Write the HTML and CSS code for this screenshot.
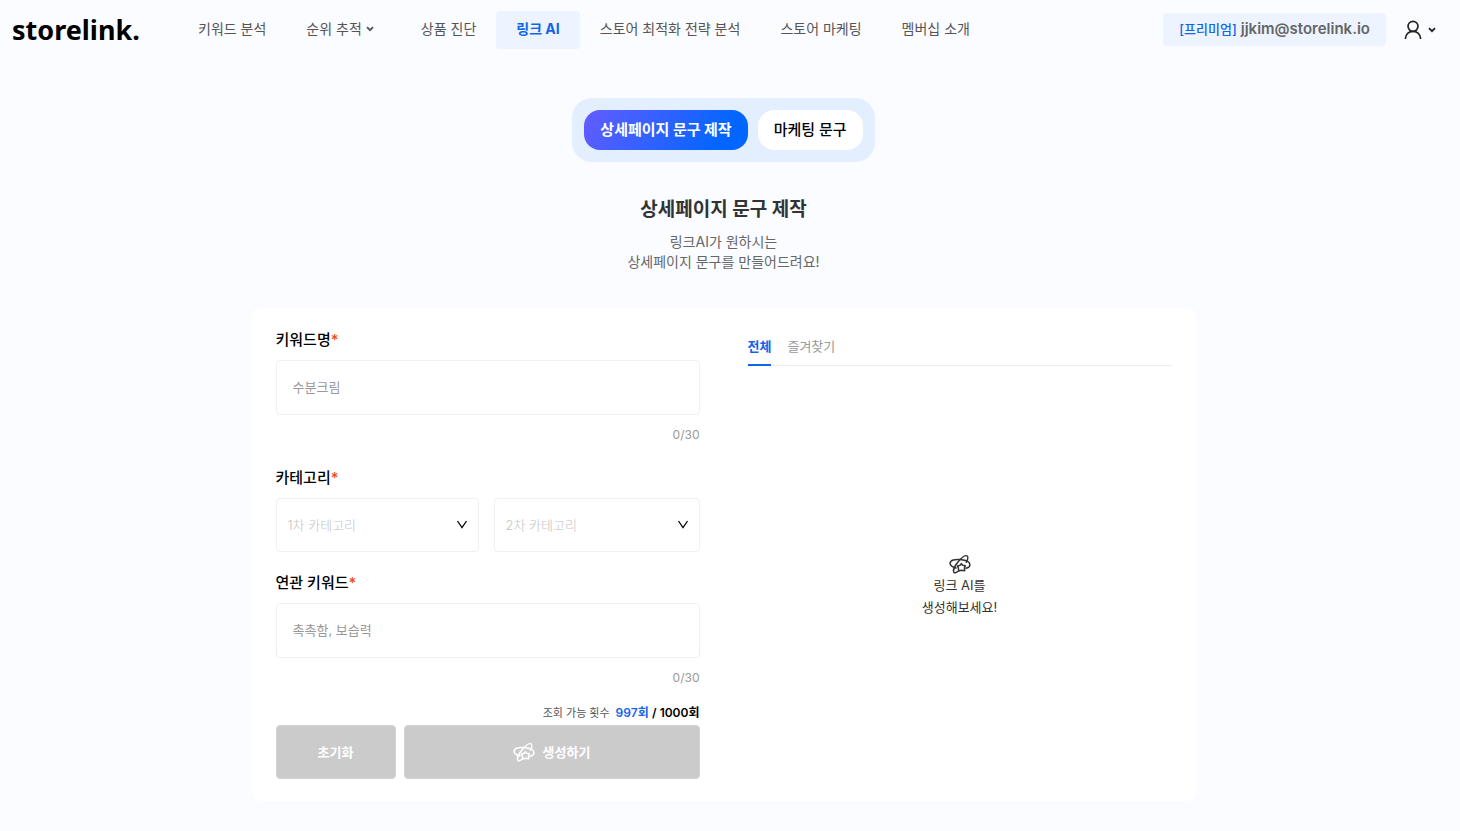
FILE: index.html
```html
<!DOCTYPE html>
<html lang="ko">
<head>
<meta charset="utf-8">
<meta name="viewport" content="width=device-width, initial-scale=1">
<title>storelink. 링크 AI</title>
<link rel="stylesheet" href="styles.css">
</head>
<body>
<svg class="defs" aria-hidden="true">
  <symbol id="atom" viewBox="0 0 22 20">
    <g fill="none" stroke="currentColor" stroke-width="1.5" stroke-linecap="round" stroke-linejoin="round">
      <path d="M7 14C3.200 12.900.900 10.900 1.100 8.900C1.400 6.100 6 5 11.300 5.600C16.800 6.200 21 8.300 20.900 10.900C20.800 12.700 19.200 13.800 17 14.200"/>
      <path d="M9 17.300C7.300 18.800 5.600 19.200 4.900 18.200C3.700 16.400 5.900 11.600 9.600 7.300C13 3.300 16.700.900 18.200 2C19.300 2.900 18.800 5.400 17.300 8.300"/>
      <path d="M12.400 9.600l1.300 1.600 2.700.500-1 2.200.300 2.900-3.300-.500-2.600.700-.400-2.900-1-2.200 2.700-.600z"/>
    </g>
  </symbol>
  <symbol id="caret" viewBox="0 0 8 6">
    <path d="M1 1.200l3 3 3-3" fill="none" stroke="currentColor" stroke-width="1.900"/>
  </symbol>
  <symbol id="arrow" viewBox="0 0 12 9">
    <path d="M1.500 1l4.500 6.500L10.500 1" fill="none" stroke="currentColor" stroke-width="1.300"/>
  </symbol>
</svg>

<header class="header">
  <a class="logo" href="#">storelink.</a>
  <nav class="nav">
    <a href="#">키워드 분석</a>
    <a href="#" class="has-menu">순위 추적<svg class="caret"><use href="#caret"/></svg></a>
    <a href="#">상품 진단</a>
    <a href="#" class="active" aria-current="page">링크 AI</a>
    <a href="#">스토어 최적화 전략 분석</a>
    <a href="#">스토어 마케팅</a>
    <a href="#">멤버십 소개</a>
  </nav>
  <div class="account"><span class="plan">[프리미엄]</span> <span class="email">jjkim@storelink.io</span></div>
  <button class="user" type="button" aria-label="내 계정">
    <svg class="person" viewBox="0 0 18 20"><g fill="none" stroke="currentColor" stroke-width="1.700"><circle cx="9" cy="6.300" r="5"/><path d="M1.300 19c.4-4.600 3.400-7.600 7.700-7.600s7.300 3 7.700 7.600"/></g></svg>
    <svg class="caret"><use href="#caret"/></svg>
  </button>
</header>

<main class="main">
  <div class="switch">
    <button type="button" class="switch-item selected">상세페이지 문구 제작</button>
    <button type="button" class="switch-item">마케팅 문구</button>
  </div>
  <h1 class="title">상세페이지 문구 제작</h1>
  <p class="subtitle">링크AI가 원하시는<br>상세페이지 문구를 만들어드려요!</p>

  <section class="card">
    <form class="form">
      <label class="label" for="keyword">키워드명<span class="required">*</span></label>
      <input class="field" id="keyword" type="text" placeholder="수분크림">
      <p class="counter">0/30</p>

      <label class="label" for="category1">카테고리<span class="required">*</span></label>
      <div class="selects">
        <div class="select">
          <select class="field" id="category1"><option>1차 카테고리</option></select>
          <svg class="arrow"><use href="#arrow"/></svg>
        </div>
        <div class="select">
          <select class="field" id="category2" aria-label="2차 카테고리"><option>2차 카테고리</option></select>
          <svg class="arrow"><use href="#arrow"/></svg>
        </div>
      </div>

      <label class="label" for="related">연관 키워드<span class="required">*</span></label>
      <input class="field" id="related" type="text" placeholder="촉촉함, 보습력">
      <p class="counter">0/30</p>

      <p class="quota"><span class="quota-name">조회 가능 횟수</span><span><b class="left">997회</b> <b>/ 1000회</b></span></p>
      <div class="actions">
        <button class="btn" type="reset">초기화</button>
        <button class="btn" type="button"><svg class="atom"><use href="#atom"/></svg>생성하기</button>
      </div>
    </form>

    <div class="results">
      <div class="tabs" role="tablist">
        <button class="tab current" type="button" role="tab" aria-selected="true">전체</button>
        <button class="tab" type="button" role="tab" aria-selected="false">즐겨찾기</button>
      </div>
      <div class="empty">
        <svg class="atom"><use href="#atom"/></svg>
        <p>링크 AI를<br>생성해보세요!</p>
      </div>
    </div>
  </section>
</main>
</body>
</html>
```

FILE: styles.css
```css
* { box-sizing: border-box; }

body {
  margin: 0;
  min-height: 100vh;
  background: #fafcff;
  color: #000;
  font: 14px/20px Inter, "Noto Sans CJK KR", sans-serif;
}

h1, p { margin: 0; }
a { color: inherit; text-decoration: none; }
button, input, select { font: inherit; color: inherit; }
button { border: 0; padding: 0; background: none; cursor: pointer; }
svg { display: block; flex: none; }
.defs { position: absolute; width: 0; height: 0; }

.header {
  display: flex;
  align-items: center;
  height: 59px;
  padding: 0 24px 0 12px;
}

.logo {
  width: 166px;
  font: 700 27px/38px "Noto Sans", sans-serif;
}

.nav { display: flex; color: #555; white-space: nowrap; }
.nav a {
  display: flex;
  align-items: center;
  gap: 4px;
  height: 38px;
  padding: 0 20px 2px;
}
.nav a.has-menu { padding-right: 27px; }
.nav a.active {
  border-radius: 4px;
  background: #edf4ff;
  color: #1264e8;
  font-weight: 700;
}

.caret { width: 8px; height: 6px; }

.account {
  display: flex;
  align-items: center;
  gap: 4px;
  height: 33px;
  margin-left: auto;
  padding: 0 16px 2px;
  border-radius: 4px;
  background: #edf4ff;
  white-space: nowrap;
}
.plan { color: #1264e8; font-size: 13px; font-weight: 500; }
.email { color: #666; font-size: 15px; font-weight: 600; }

.user {
  display: flex;
  align-items: center;
  gap: 6px;
  margin-left: 18px;
  color: #222;
}
.person { width: 18px; height: 20px; }

.main {
  display: flex;
  flex-direction: column;
  align-items: center;
  padding: 39px 13px 30px 0;
}

.switch {
  display: flex;
  gap: 10px;
  padding: 12px;
  border-radius: 20px;
  background: #e3eeff;
}
.switch-item {
  height: 40px;
  padding: 0 16px;
  border-radius: 16px;
  background: #fff;
  font-size: 15px;
  font-weight: 500;
}
.switch-item.selected {
  background: linear-gradient(120deg, #655cff, #0066ff 85%);
  color: #fff;
  font-weight: 700;
}

.title {
  margin-top: 33px;
  color: #333;
  font-size: 19px;
  font-weight: 700;
  line-height: 30px;
}
.subtitle { margin-top: 7px; color: #666; text-align: center; }

.card {
  display: grid;
  grid-template-columns: 1fr 1fr;
  gap: 48px;
  width: 100%;
  max-width: 944px;
  margin-top: 36px;
  padding: 22px 24px;
  border-radius: 8px;
  background: #fff;
}

.form { display: flex; flex-direction: column; }
.label {
  margin-bottom: 10px;
  font-size: 15px;
  font-weight: 500;
}
.required { color: #f04a23; }

.field {
  width: 100%;
  height: 55px;
  padding: 0 16px 2px;
  border: 1px solid #f0f0f0;
  border-radius: 4px;
  background: #fff;
  font-size: 13px;
}
.field::placeholder { color: #999; }

.counter {
  margin: 10px 0 23px;
  color: #999;
  font-size: 12px;
  text-align: right;
}

.selects {
  display: grid;
  grid-template-columns: 203fr 206fr;
  gap: 15px;
  margin-bottom: 21px;
}
.select { position: relative; }
.select .field {
  display: block;
  height: 54px;
  padding: 0 32px 0 11px;
  appearance: none;
  color: #c4c4c4;
  font-weight: 300;
}
.arrow {
  position: absolute;
  top: 22px;
  right: 11px;
  width: 12px;
  height: 9px;
  pointer-events: none;
}

.quota {
  display: flex;
  justify-content: flex-end;
  gap: 6px;
  margin-top: -8px;
  font-size: 12px;
}
.quota-name { color: #555; font-size: 11px; }
.quota b { font-weight: 600; }
.quota .left { color: #1264e8; }

.actions { display: grid; grid-template-columns: 120fr 296fr; gap: 8px; margin-top: 2px; }
.btn {
  display: flex;
  align-items: center;
  justify-content: center;
  gap: 8px;
  height: 54px;
  border: 1px solid #d4d4d4;
  border-radius: 4px;
  background: #cbcbcb;
  color: #fff;
  font-size: 13px;
  font-weight: 700;
}
.atom { width: 22px; height: 20px; }

.results { display: flex; flex-direction: column; }
.tabs {
  display: flex;
  gap: 16px;
  height: 36px;
  border-bottom: 1px solid #eee;
}
.tab {
  height: 36px;
  padding-bottom: 2px;
  border-bottom: 2px solid transparent;
  color: #999;
  font-size: 13px;
}
.tab.current { border-color: #1264e8; color: #1264e8; font-weight: 700; }

.empty {
  display: flex;
  flex: 1;
  flex-direction: column;
  align-items: center;
  justify-content: center;
  padding-top: 26px;
  color: #333;
  font-size: 13px;
  line-height: 22px;
  text-align: center;
}
```
